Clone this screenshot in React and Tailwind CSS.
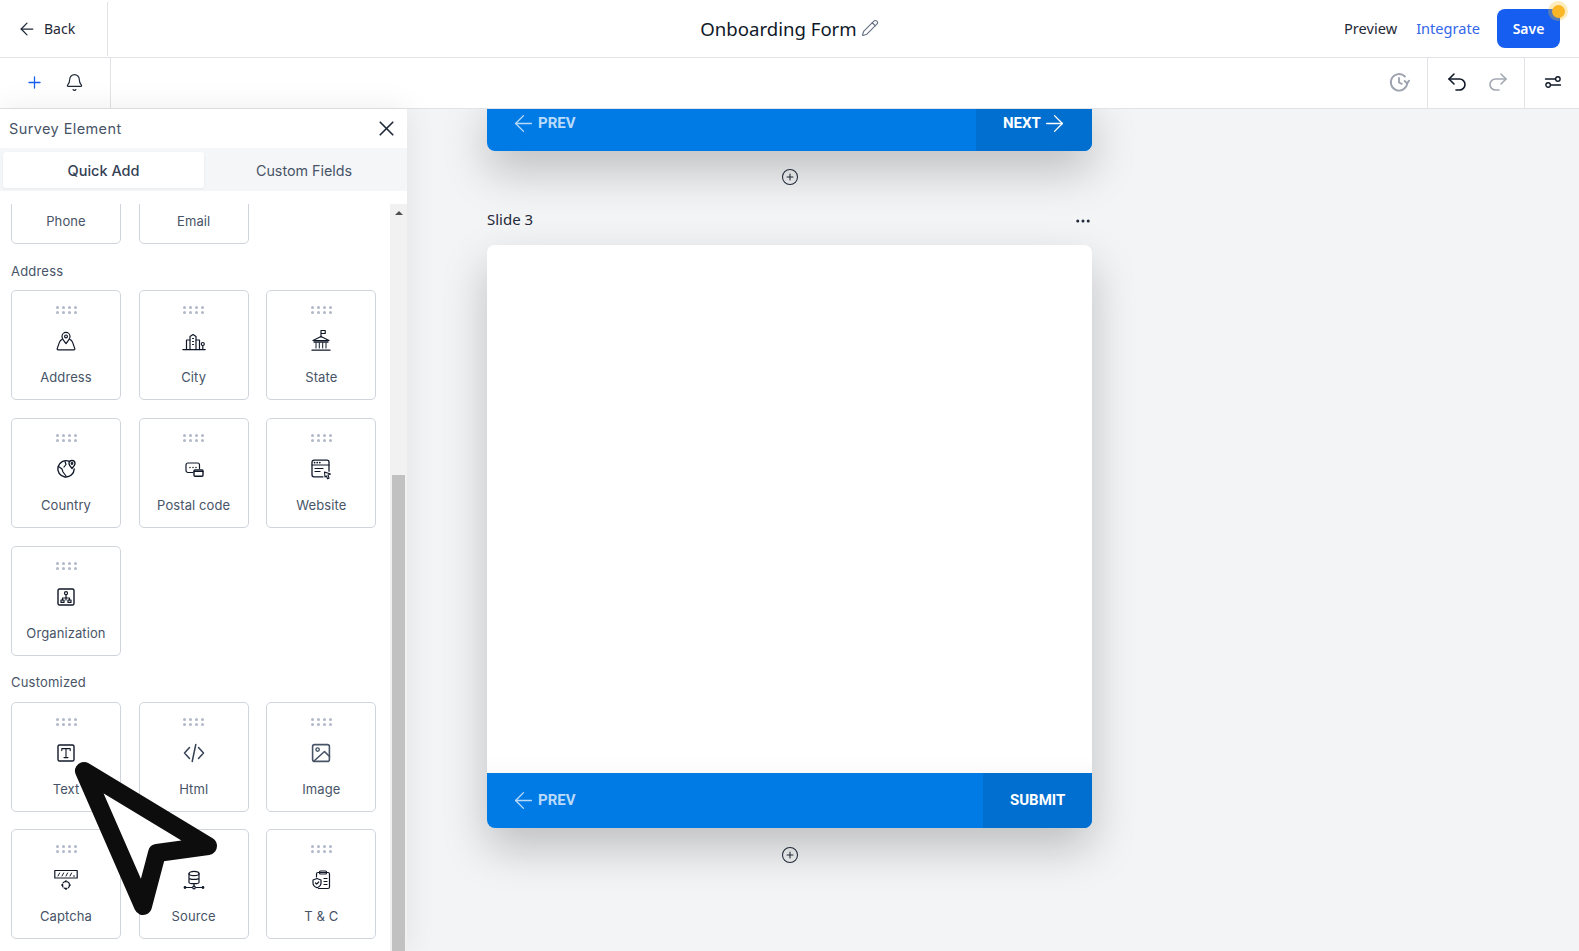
import React from "react";
import { ArrowLeft, Plus, Bell, X, Pencil, CirclePlus, Ellipsis, Undo2, Redo2 } from "lucide-react";

const IconBox = ({ children, className = "text-[#101828]" }) => (
  <svg
    viewBox="0 0 24 24"
    fill="none"
    stroke="currentColor"
    strokeWidth="1.2"
    strokeLinecap="round"
    strokeLinejoin="round"
    className={`w-6 h-6 ${className}`}
  >
    {children}
  </svg>
);

const AddressIcon = () => (
  <IconBox>
    <path d="M12 14.5C9.3 11.2 8 9.6 8 7.4a4 4 0 0 1 8 0c0 2.2-1.3 3.8-4 7.1z" />
    <circle cx="12" cy="7.4" r="1.4" />
    <path d="M8.3 10.4C6.6 10.9 5.8 12 5.3 13.6L3.2 19.6c-.2.7.1 1.2.8 1.2h16c.7 0 1-.5.8-1.2l-2.1-6C18.2 12 17.4 10.9 15.7 10.4" />
  </IconBox>
);

const CityIcon = () => (
  <IconBox>
    <path d="M0.8 20.6h22.4" />
    <path d="M8 20.6V7.5l3-2 3 2v13.1" />
    <path d="M8 11H4.5v9.6M14 11h3.5v9.6" />
    <path d="M10.5 9.5h1M10.5 12.5h1M10.5 15.5h1" />
    <circle cx="20.8" cy="15" r="1.5" />
    <path d="M20.8 16.5v4" />
  </IconBox>
);

const StateIcon = () => (
  <IconBox>
    <path d="M12 8V1.5h4.2v3H12" />
    <path d="M4 11.5 12 7.5l8 4z" />
    <path d="M7 14v5M10.3 14v5M13.7 14v5M17 14v5" strokeWidth="1" />
    <path d="M5 13h14M3 21.2h18" strokeWidth="1.3" />
  </IconBox>
);

const CountryIcon = () => (
  <IconBox>
    <path d="M15 4.2A8.2 8.2 0 1 0 20.2 12" strokeWidth="1.4" />
    <path d="M4.5 9.5 8 12l1 3 3 4M11 4.5 12 7.5 10 10" />
    <path d="M18 11.5c-2-2.3-3-3.4-3-5a3 3 0 0 1 6 0c0 1.6-1 2.7-3 5z" strokeWidth="1.3" />
    <circle cx="18" cy="6.5" r=".8" />
  </IconBox>
);

const PostalIcon = () => (
  <IconBox>
    <path d="M11 15.5H6a2 2 0 0 1-2-2V8a2 2 0 0 1 2-2h9.5a2 2 0 0 1 2 2v3.5" />
    <path d="M8 10.5h.01M11 10.5h.01M14 10.5h.01" strokeWidth="1.5" />
    <rect x="12" y="13" width="9" height="6.2" rx="1" strokeWidth="1.4" />
    <path d="M12 14.5h9" />
  </IconBox>
);

const WebsiteIcon = () => (
  <IconBox>
    <path d="M14 19.8H5a2 2 0 0 1-2-2V5.2a2 2 0 0 1 2-2h13a2 2 0 0 1 2 2v9" strokeWidth="1.3" />
    <path d="M3 8h17" />
    <path d="M5.6 5.6h.01M8.2 5.6h.01M10.8 5.6h.01" strokeWidth="1.8" />
    <path d="M6 11.5h8M6 14.5h5" />
    <path d="M15.5 15l6 2-2.5 1 1 3.2-1.5.5-1-2.7-1.5 1z" strokeWidth="1.1" />
  </IconBox>
);

const OrgIcon = () => (
  <IconBox>
    <rect x="4" y="4" width="16" height="16" rx="1.6" strokeWidth="1.4" />
    <circle cx="12" cy="8.2" r="1.5" />
    <path d="M12 9.7v3.3M8.5 15v-2h7v2" />
    <rect x="7" y="15" width="3" height="2.4" />
    <rect x="14" y="15" width="3" height="2.4" />
    <path d="M12 13v2" />
  </IconBox>
);

const TextIcon = () => (
  <IconBox>
    <rect x="4" y="4" width="16" height="16" rx="1.6" strokeWidth="1.4" />
    <path d="M7.8 9.6V7.6h8.4v2M12 7.6v9M10 16.6h4" strokeWidth="1.1" />
  </IconBox>
);

const HtmlIcon = () => (
  <IconBox className="text-[#344054]">
    <path d="M7.5 6.5 2.5 12l5 5.5M16.5 6.5l5 5.5-5 5.5M13.8 3.5l-3.6 17" strokeWidth="1.5" />
  </IconBox>
);

const ImageIcon = () => (
  <IconBox className="text-[#475467]">
    <rect x="3.6" y="3.6" width="16.8" height="16.8" rx="2" strokeWidth="1.6" />
    <circle cx="8.6" cy="8.6" r="1.7" strokeWidth="1.4" />
    <path d="M5 20l10.5-9.5 5 5" strokeWidth="1.6" />
  </IconBox>
);

const CaptchaIcon = () => (
  <IconBox>
    <rect x="0.8" y="2.5" width="22.4" height="7.5" strokeWidth="1.2" />
    <path d="M4 8l1.6-3M8 8l1.6-3M12 8l1.6-3M16 8l1.6-3M19.5 8h1" strokeWidth="1" />
    <circle cx="12" cy="17" r="3.6" strokeWidth="1.2" strokeDasharray="3 1.5" />
    <path d="M12 12.5v1.4M12 20.1v1.4M7.5 17h1.4M15.1 17h1.4" />
  </IconBox>
);

const SourceIcon = () => (
  <IconBox>
    <ellipse cx="12" cy="5.5" rx="5" ry="2.2" />
    <path d="M7 5.5v9c0 .8 2 1.2 5 1.2s5-.4 5-1.2v-9M7 10c0 .8 2 1.4 5 1.4s5-.6 5-1.4" />
    <path d="M12 15.7v2.8M3 19.5h7M14 19.5h7" />
    <circle cx="12" cy="19.5" r="1.3" />
    <circle cx="3" cy="19.5" r=".8" />
    <circle cx="21" cy="19.5" r=".8" />
  </IconBox>
);

const TermsIcon = () => (
  <IconBox>
    <path d="M7.5 9V6a1.5 1.5 0 0 1 1.5-1.5h10A1.5 1.5 0 0 1 20.5 6v13a1.5 1.5 0 0 1-1.5 1.5H9.5" />
    <rect x="10.5" y="3" width="7" height="3" rx="1" />
    <path d="M8 10.5l4 1.5v3c0 2.4-1.6 3.8-4 4.8-2.4-1-4-2.4-4-4.8v-3z" />
    <path d="M6.5 15l1.2 1.2 2-2.2" />
    <path d="M15 10.5h3M15 13.5h3M15 16.5h3" />
  </IconBox>
);

const HistoryIcon = () => (
  <svg viewBox="0 0 24 24" fill="none" stroke="#9ca3af" strokeWidth="2" strokeLinecap="round" strokeLinejoin="round" className="w-[22px] h-[22px]">
    <path d="M21 13.5A9 9 0 1 1 18.5 6" />
    <path d="M12 7.5V12.5l3 1.5" />
    <path d="M23 10.5l-2.2 3-2.6-2.6" />
  </svg>
);

const SlidersIcon = () => (
  <svg viewBox="0 0 24 24" fill="none" stroke="#101828" strokeWidth="1.8" strokeLinecap="round" className="w-[18px] h-[18px]">
    <path d="M2 8h13M9 16h13" />
    <circle cx="18.5" cy="8" r="3" />
    <circle cx="5.5" cy="16" r="3" />
  </svg>
);

// 4x2 drag handle on each card
const DragDots = () => (
  <div className="grid grid-cols-4 gap-x-[3px] gap-y-[2px] w-[21px]">
    {Array.from({ length: 8 }).map((_, i) => (
      <span key={i} className="w-[3px] h-[3px] rounded-full bg-[#b0b8ca]" />
    ))}
  </div>
);

const Card = ({ label, icon }) => (
  <div className="flex flex-col items-center w-[110px] h-[110px] pt-[15px] bg-white rounded-[5px] border border-[#d0d5dd]">
    <DragDots />
    <div className="mt-[15px] h-6">{icon}</div>
    <div className="mt-[14px] text-[13px] tracking-[0.1px] leading-5 text-[#475467] font-['Inter',sans-serif]">{label}</div>
  </div>
);

const Grid = ({ children, className = "gap-y-[18px]" }) => (
  <div className={`grid grid-cols-[repeat(3,110px)] gap-x-[17.67px] ${className}`}>{children}</div>
);

const SectionLabel = ({ children, className }) => (
  <div className={`text-[13px] tracking-[0.2px] leading-5 text-[#475467] font-['Inter',sans-serif] ${className}`}>{children}</div>
);

const SlideFooter = ({ action, actionClass, className = "" }) => (
  <div className={`flex h-[55px] w-full bg-[#007be5] rounded-b-[8px] overflow-hidden font-['Roboto',sans-serif] font-bold text-[15px] ${className}`}>
    <div className="flex flex-1 items-center gap-[1px] pl-[23px] text-[#b9dafa]">
      <ArrowLeft size={27} strokeWidth={1.2} />
      <span>PREV</span>
    </div>
    <div className={`flex items-center bg-[#006fcf] text-white ${actionClass}`}>{action}</div>
  </div>
);

const AddSlide = () => (
  <div className="flex justify-center text-[#1f2937]">
    <CirclePlus size={18} strokeWidth={1.4} />
  </div>
);

const App = () => {
  return (
    <div className="flex flex-col h-screen overflow-hidden bg-[#f3f4f6] font-['Noto_Sans',sans-serif]">
      {/* top bar */}
      <header className="grid grid-cols-[1fr_auto_1fr] items-center h-[58px] shrink-0 bg-white border-b border-[#e2e3e6]">
        <div className="flex items-center h-[54px]">
          <div className="flex items-center gap-[7px] w-[108px] h-full pl-[17px] border-r border-[#e2e3e6] text-[14px] text-[#1f2937]">
            <ArrowLeft size={20} strokeWidth={1.5} />
            <span>Back</span>
          </div>
        </div>
        <div className="flex items-center gap-[4px] text-[18.6px] text-[#101828]">
          <span>Onboarding Form</span>
          <Pencil size={18} strokeWidth={1.5} className="text-[#667085]" />
        </div>
        <div className="flex items-center justify-end pr-[19px] text-[14.6px]">
          <span className="text-[#1f2937]">Preview</span>
          <span className="ml-[19px] text-[#3366e8]">Integrate</span>
          <button className="relative ml-[17px] w-[63px] h-[39px] rounded-[8px] bg-[#155eef] text-white text-[14px] font-semibold">
            Save
            <span className="absolute -top-[8px] -right-[8px] flex items-center justify-center w-[20px] h-[20px] rounded-full bg-[#fbbf24]/30">
              <span className="w-[13px] h-[13px] rounded-full bg-[#fbb625]" />
            </span>
          </button>
        </div>
      </header>

      {/* toolbar */}
      <div className="flex items-center justify-between h-[51px] shrink-0 bg-white border-b border-[#e2e3e6]">
        <div className="flex items-center gap-[21px] w-[111px] h-full pl-[25px] pb-[2px] border-r border-[#e2e3e6]">
          <Plus size={19} strokeWidth={1.6} className="text-[#155eef]" />
          <Bell size={19} strokeWidth={1.5} className="text-[#1f2937]" />
        </div>
        <div className="flex items-center h-full">
          <div className="flex items-center h-full pr-[17px] pb-[2px]">
            <HistoryIcon />
          </div>
          <div className="flex items-center gap-[17px] h-full pl-[17px] pr-[14px] pb-[3px] border-x border-[#e2e3e6]">
            <Undo2 size={24} strokeWidth={1.6} className="text-[#101828]" />
            <Redo2 size={24} strokeWidth={1.6} className="text-[#a3a8b2]" />
          </div>
          <div className="flex items-center h-full pl-[19px] pr-[17px] pb-[2px]">
            <SlidersIcon />
          </div>
        </div>
      </div>

      <div className="flex flex-1 min-h-0">
        {/* survey element panel */}
        <aside className="flex flex-col w-[407px] shrink-0 bg-white shadow-[0_0_30px_rgba(0,0,0,0.08)] z-10">
          <div className="flex items-center justify-between h-[39px] shrink-0 pl-[9px] pr-[8px]">
            <span className="text-[14.5px] tracking-[0.4px] text-[#475467] font-['Inter',sans-serif]">Survey Element</span>
            <X size={25} strokeWidth={1.6} className="text-[#1f2937]" />
          </div>
          <div className="flex h-[43px] shrink-0 pl-[3px] pr-[3px] pt-[4px] bg-[#f5f6f8] font-['Inter',sans-serif] text-[14.5px]">
            <div className="flex items-center justify-center w-[201px] h-[36px] pt-[1px] rounded-[3px] bg-white shadow-[0_1px_3px_rgba(0,0,0,0.06)] font-medium text-[#344054]">
              Quick Add
            </div>
            <div className="flex flex-1 items-center justify-center h-[36px] pt-[1px] text-[14.3px] text-[#475467]">Custom Fields</div>
          </div>
          <div className="flex flex-1 min-h-0 mt-[13px]">
            <div className="flex-1 overflow-hidden pl-[11px]">
              <div className="-mt-[70px]">
                <Grid>
                  <Card label="Phone" icon={null} />
                  <Card label="Email" icon={null} />
                </Grid>
                <SectionLabel className="mt-[17px] mb-[9px]">Address</SectionLabel>
                <Grid>
                  <Card label="Address" icon={<AddressIcon />} />
                  <Card label="City" icon={<CityIcon />} />
                  <Card label="State" icon={<StateIcon />} />
                  <Card label="Country" icon={<CountryIcon />} />
                  <Card label="Postal code" icon={<PostalIcon />} />
                  <Card label="Website" icon={<WebsiteIcon />} />
                  <Card label="Organization" icon={<OrgIcon />} />
                </Grid>
                <SectionLabel className="mt-[16px] mb-[10px]">Customized</SectionLabel>
                <Grid className="gap-y-[17px]">
                  <Card label="Text" icon={<TextIcon />} />
                  <Card label="Html" icon={<HtmlIcon />} />
                  <Card label="Image" icon={<ImageIcon />} />
                  <Card label="Captcha" icon={<CaptchaIcon />} />
                  <Card label="Source" icon={<SourceIcon />} />
                  <Card label="T & C" icon={<TermsIcon />} />
                </Grid>
              </div>
            </div>
            {/* scrollbar */}
            <div className="flex flex-col items-center w-[17px] shrink-0 bg-[#f1f1f1]">
              <div className="h-[271px] w-full flex justify-center pt-[7px]">
                <span className="w-0 h-0 border-x-[4px] border-x-transparent border-b-[4px] border-b-[#505050]" />
              </div>
              <div className="flex-1 w-[13px] bg-[#c1c1c1]" />
            </div>
          </div>
        </aside>

        {/* slides */}
        <main className="flex-1 min-w-0 overflow-hidden pl-[80px]">
          <div className="w-[605px] -mt-[13px]">
            <div className="rounded-b-[8px] shadow-[0_20px_45px_rgba(0,0,0,0.22)]">
              <SlideFooter
                actionClass="w-[116px] pl-[27px]"
                action={
                  <>
                    <span>NEXT</span>
                    <ArrowLeft size={27} strokeWidth={1.2} className="rotate-180" />
                  </>
                }
              />
            </div>
            <div className="mt-[17px]">
              <AddSlide />
            </div>
            <div className="flex items-center justify-between h-5 mt-[23px] mb-[16px] text-[15px] text-[#1f2937]">
              <span>Slide 3</span>
              <Ellipsis size={18} strokeWidth={2} className="mt-[3px]" />
            </div>
            <div className="rounded-[8px] shadow-[0_20px_45px_rgba(0,0,0,0.22)]">
              <div className="h-[528px] rounded-t-[8px] bg-gradient-to-b from-white from-[97%] to-[#fafafa]" />
              <SlideFooter
                actionClass="w-[109px] pl-[27px]"
                action={<span>SUBMIT</span>}
              />
            </div>
            <div className="mt-[18px]">
              <AddSlide />
            </div>
          </div>
        </main>
      </div>

      {/* oversized pointer lying on top of the page */}
      <svg className="absolute top-0 left-0 z-20 pointer-events-none" width="240" height="951" viewBox="0 0 240 951">
        <path
          d="M84 771 L143 906 L157 853 L208 846 Z"
          fill="#ffffff"
          stroke="#0d0d0d"
          strokeWidth="18"
          strokeLinejoin="round"
        />
      </svg>
    </div>
  );
};

export default App;
